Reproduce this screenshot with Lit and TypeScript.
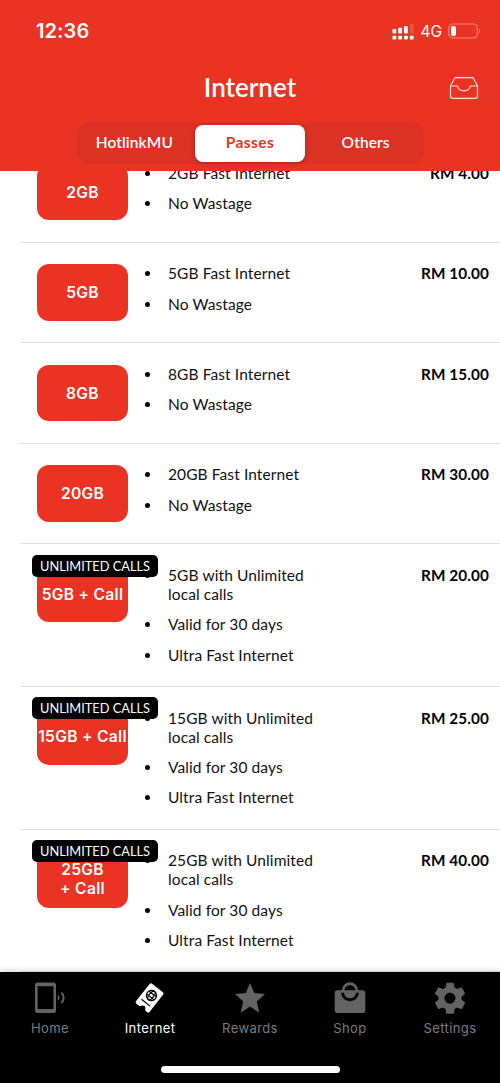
import { LitElement, html, css, svg, nothing } from "lit";
import { customElement, property } from "lit/decorators.js";

interface Pass {
  label: string[];
  price: string;
  features: string[];
  badge?: string;
}

const passes: Pass[] = [
  { label: ["2GB"], price: "RM 4.00", features: ["2GB Fast Internet", "No Wastage"] },
  { label: ["5GB"], price: "RM 10.00", features: ["5GB Fast Internet", "No Wastage"] },
  { label: ["8GB"], price: "RM 15.00", features: ["8GB Fast Internet", "No Wastage"] },
  { label: ["20GB"], price: "RM 30.00", features: ["20GB Fast Internet", "No Wastage"] },
  { label: ["5GB + Call"], price: "RM 20.00", badge: "UNLIMITED CALLS", features: ["5GB with Unlimited local calls", "Valid for 30 days", "Ultra Fast Internet"] },
  { label: ["15GB + Call"], price: "RM 25.00", badge: "UNLIMITED CALLS", features: ["15GB with Unlimited local calls", "Valid for 30 days", "Ultra Fast Internet"] },
  { label: ["25GB", "+ Call"], price: "RM 40.00", badge: "UNLIMITED CALLS", features: ["25GB with Unlimited local calls", "Valid for 30 days", "Ultra Fast Internet"] },
];

const icons = {
  home: svg`<path fill-rule="evenodd" d="M5.6 2.4H21.4A2.6 2.6 0 0 1 24 5V30.4A2.6 2.6 0 0 1 21.400 33H5.600A2.600 2.600 0 0 1 3 30.400V5A2.600 2.600 0 0 1 5.600 2.400ZM5.600 6.300V29.100H21.400V6.300Z"/>
    <path d="M26 15.400q2.600 2.300 0 4.800z" stroke="currentColor" stroke-width=".6"/><path d="M29.400 12.600q4.400 5.200 0 10.400" fill="none" stroke="currentColor" stroke-width="1.900"/>`,
  internet: svg`<g transform="rotate(38 17.500 18)"><path d="M10.400 5.300H24.600A1.500 1.500 0 0 1 26.100 6.800V29A1.500 1.500 0 0 1 24.600 30.500H22.500C20.800 30.500 21 27.500 18.500 27.500C15.500 27.500 16 30.500 13.500 30.500H10.400A1.500 1.500 0 0 1 8.900 29V6.800A1.500 1.500 0 0 1 10.400 5.300Z"/>
    <g fill="none" stroke="#000" stroke-width="1.200"><circle cx="17.500" cy="14.800" r="5.100"/><ellipse cx="17.500" cy="14.800" rx="2.300" ry="5.100"/><path d="M13 13h9M13 16.600h9M12 24h11"/></g></g>`,
  rewards: svg`<path transform="scale(1.5)" d="M12 17.700 18.180 21.800 16.540 14.400 22 9.300 14.810 8.700 12 2 9.190 8.700 2 9.300 7.460 14.400 5.820 21.800Z"/>`,
  shop: svg`<circle cx="18" cy="10.600" r="6.900" fill="none" stroke="currentColor" stroke-width="2.700"/>
    <path d="M5.500 10.300H30.500A2.800 2.800 0 0 1 33.300 13.100V30.200A2.800 2.800 0 0 1 30.500 33H5.500A2.800 2.800 0 0 1 2.700 30.200V13.100A2.800 2.800 0 0 1 5.500 10.300Z"/>
    <path d="M10.600 12.800a7.400 7 0 0 0 14.800 0" fill="none" stroke="#000" stroke-width="2.900"/>`,
  settings: svg`<path transform="translate(-.6 -.4) scale(1.550)" d="M19.430 12.980c.040-.320.070-.640.070-.980s-.030-.660-.070-.980l2.110-1.650c.190-.150.240-.420.120-.640l-2-3.460c-.120-.220-.390-.300-.610-.220l-2.490 1c-.520-.400-1.080-.730-1.690-.980l-.380-2.650C14.460 2.180 14.250 2 14 2h-4c-.250 0-.460.180-.490.420l-.380 2.650c-.610.250-1.170.590-1.690.980l-2.490-1c-.230-.090-.490 0-.610.220l-2 3.460c-.130.220-.070.490.120.640l2.110 1.650c-.040.320-.070.650-.070.980s.030.660.070.980l-2.110 1.650c-.190.150-.240.420-.120.640l2 3.460c.120.220.390.300.610.220l2.490-1c.520.400 1.080.730 1.690.980l.380 2.650c.030.240.240.420.490.420h4c.250 0 .460-.180.490-.420l.380-2.650c.610-.250 1.170-.590 1.690-.980l2.490 1c.230.090.490 0 .610-.220l2-3.460c.120-.220.070-.490-.120-.640l-2.110-1.650zM12 15.500c-1.930 0-3.500-1.570-3.500-3.500s1.570-3.500 3.500-3.500 3.500 1.570 3.500 3.500-1.570 3.500-3.500 3.500z"/>`,
};

@customElement("pass-row")
class PassRow extends LitElement {
  @property({ attribute: false }) pass!: Pass;

  static styles = css`
    :host { display: block; margin-left: 20px; border-bottom: 1px solid #e1e1e2; }
    .row { display: grid; grid-template-columns: 91px 1fr auto; align-items: start; column-gap: 17px; padding: 21.500px 11px 0 17px; height: 99.500px; box-sizing: border-box; }
    .row.tall { height: 141.700px; }
    .tile { position: relative; height: 56.500px; border-radius: 12px; background: #eb3323; color: #fff; display: flex; flex-direction: column; align-items: center; justify-content: center; font: 600 15.600px/19px Inter, sans-serif; letter-spacing: .3px; white-space: nowrap; }
    .badge { position: absolute; left: -5px; top: -11.300px; width: 126px; height: 22px; border-radius: 5px; background: #000; color: #fff; font: 400 12.800px/22px Lato, sans-serif; letter-spacing: 0; text-align: center; z-index: 1; }
    ul { list-style: none; margin: 0; padding: 0; display: flex; flex-direction: column; gap: 11.400px; }
    li { display: grid; grid-template-columns: 5px 150px; column-gap: 18px; font: 400 15.500px/19px Lato, sans-serif; letter-spacing: .1px; color: #111; }
    .dot { width: 5px; height: 5px; border-radius: 50%; background: #000; margin-top: 7px; }
    .price { font: 700 15.300px/19px Lato, sans-serif; letter-spacing: .1px; color: #000; white-space: nowrap; }
  `;

  render() {
    const { label, price, features, badge } = this.pass;
    return html`<div class="row ${badge ? "tall" : ""}">
      <div class="tile">
        ${label.map((l) => html`<span>${l}</span>`)}
        ${badge ? html`<span class="badge">${badge}</span>` : nothing}
      </div>
      <ul>${features.map((f) => html`<li><i class="dot"></i><span>${f}</span></li>`)}</ul>
      <span class="price">${price}</span>
    </div>`;
  }
}

@customElement("tab-item")
class TabItem extends LitElement {
  @property() name: keyof typeof icons = "home";
  @property() label = "";

  static styles = css`
    :host { flex: 1; display: flex; flex-direction: column; align-items: center; color: #636363; }
    :host([active]) { color: #fff; }
    svg { width: 36px; height: 36px; fill: currentColor; display: block; }
    .label { font: 400 13px/16px Inter, sans-serif; letter-spacing: .4px; margin-top: 4.500px; color: #7b7b80; }
    :host([active]) .label { color: #fff; }
  `;

  render() {
    return html`<svg viewBox="0 0 36 36">${icons[this.name]}</svg><span class="label">${this.label}</span>`;
  }
}

@customElement("app-root")
class AppRoot extends LitElement {
  static styles = css`
    :host { display: flex; flex-direction: column; height: 1083px; width: 500px; overflow: hidden; background: #fff; }
    header { height: 170.500px; flex: none; background: #eb3323; color: #fff; z-index: 2; }
    .status { display: flex; align-items: center; height: 62px; padding: 0 19px 0 36px; }
    .time { font: 600 20px/24px Inter, sans-serif; letter-spacing: .1px; flex: 1; }
    .signal { width: 22px; height: 17px; }
    .net { font: 400 15.500px/20px Inter, sans-serif; margin: 1px 6px 0 6.500px; }
    .battery { width: 33px; height: 16px; }
    .title { display: grid; grid-template-columns: 50px 1fr 50px; align-items: center; height: 50px; padding: 0 10px 0 10px; }
    .title h1 { grid-column: 2; margin: 0; text-align: center; font: 600 26px/32px Lato, sans-serif; }
    .inbox { width: 30px; height: 24px; margin: 2px 11px 0 auto; }
    .tabs { display: grid; grid-template-columns: repeat(3, 1fr); align-items: center; width: 347px; height: 42px; margin: 10px auto 0; border-radius: 12px; background: #dc3226; text-align: center; font: 600 15.500px/35px Lato, sans-serif; letter-spacing: .1px; }
    .tab { height: 37px; margin: 0 3px; }
    .on { background: #fff; color: #eb3323; border-radius: 8px; box-shadow: 0 1px 5px rgba(0,0,0,.25); font-weight: 700; letter-spacing: .4px; }
    main { flex: 1; min-height: 0; overflow: hidden; }
    .list { margin-top: -28.200px; }
    nav { height: 111px; flex: none; background: #000; display: flex; flex-direction: column; align-items: center; box-shadow: 0 -1px 6px rgba(0,0,0,.18); z-index: 2; }
    .items { display: flex; align-self: stretch; padding-top: 7.500px; height: 86px; }
    .bar { width: 179px; height: 7px; border-radius: 4px; background: #fff; }
  `;

  render() {
    return html`
      <header>
        <div class="status">
          <span class="time">12:36</span>
          <svg class="signal" viewBox="0 0 22 17" fill="#fff">
            <rect x="0.500" y="6" width="3.800" height="4.400" rx=".8"/><rect x="6.300" y="4.800" width="3.800" height="5.600" rx=".8"/><rect x="12" y="3" width="3.800" height="7.400" rx=".8"/><rect x="17.800" y="1" width="3.800" height="9.400" rx=".8" opacity=".16"/>
            <rect x="0.500" y="12.700" width="3.800" height="3.800" rx=".8"/><rect x="6.300" y="12.700" width="3.800" height="3.800" rx=".8"/><rect x="12" y="12.700" width="3.800" height="3.800" rx=".8"/><rect x="17.800" y="12.700" width="3.800" height="3.800" rx=".8"/>
          </svg>
          <span class="net">4G</span>
          <svg class="battery" viewBox="0 0 33 16"><rect x=".8" y="1" width="28.600" height="14" rx="4" fill="none" stroke="#fff" stroke-opacity=".4" stroke-width="1.200"/><rect x="3" y="3" width="5" height="10" rx="1.800" fill="#fff"/><path d="M31 5.500q2 2.500 0 5z" fill="#fff" opacity=".45"/></svg>
        </div>
        <div class="title">
          <h1>Internet</h1>
          <svg class="inbox" viewBox="0 0 30 24" fill="none" stroke="#fff" stroke-opacity=".85" stroke-width="1.200" stroke-linejoin="round"><path d="M1.500 10 5.500 2.500Q6 1.600 7 1.600H23Q24 1.600 24.500 2.500L28.500 10V20Q28.500 22.400 26 22.400H4Q1.500 22.400 1.500 20ZM1.500 10H8.500Q9.500 14.800 15 14.800T21.500 10H28.500"/></svg>
        </div>
        <div class="tabs"><span class="tab">HotlinkMU</span><span class="tab on">Passes</span><span class="tab">Others</span></div>
      </header>
      <main><div class="list">${passes.map((p) => html`<pass-row .pass=${p}></pass-row>`)}</div></main>
      <nav>
        <div class="items">
          <tab-item name="home" label="Home"></tab-item>
          <tab-item name="internet" label="Internet" active></tab-item>
          <tab-item name="rewards" label="Rewards"></tab-item>
          <tab-item name="shop" label="Shop"></tab-item>
          <tab-item name="settings" label="Settings"></tab-item>
        </div>
        <div class="bar"></div>
      </nav>`;
  }
}
